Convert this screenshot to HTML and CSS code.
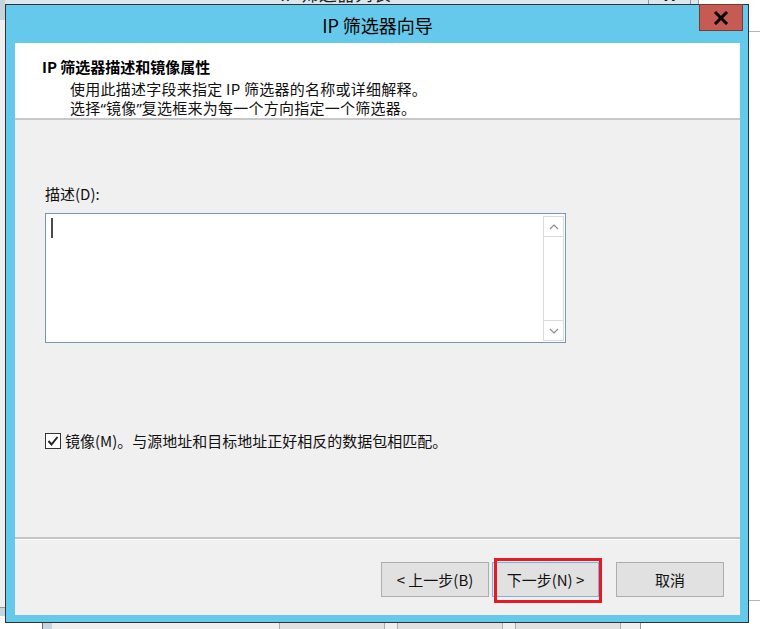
FILE: index.html
```html
<!DOCTYPE html>
<html lang="zh-CN">
<head>
<meta charset="utf-8">
<title>IP 筛选器向导</title>
<link rel="stylesheet" href="styles.css">
</head>
<body>
<div class="desk">
  <div class="bg-top">
    <span class="bg-title">IP 筛选器列表</span>
    <span class="bg-close">X</span>
  </div>
  <div class="bg-left"></div>
  <div class="bg-right"></div>
  <div class="bg-bottom">
    <span class="bg-strip"></span>
    <span class="bg-btn">确定</span>
    <span class="bg-btn">取消</span>
    <span class="bg-btn">应用(A)</span>
  </div>

  <div class="dialog">
    <div class="titlebar">
      <span class="title">IP 筛选器向导</span>
    </div>
    <button class="close" type="button" aria-label="关闭">
      <svg width="16" height="14" viewBox="0 0 16 14"><path d="M2 1 L14 13 M14 1 L2 13" stroke="#000" stroke-width="3" fill="none"/></svg>
    </button>
    <div class="client">
      <div class="header">
        <div class="h-title">IP 筛选器描述和镜像属性</div>
        <div class="h-line">使用此描述字段来指定 IP 筛选器的名称或详细解释。</div>
        <div class="h-line">选择<span class="q">“</span>镜像<span class="q">”</span>复选框来为每一个方向指定一个筛选器。</div>
      </div>
      <div class="body">
        <div class="field-label">描述(D):</div>
        <div class="textbox">
          <div class="text-area"><span class="caret"></span></div>
          <div class="vscroll">
            <div class="sb-btn">
              <svg width="10" height="6" viewBox="0 0 10 6"><path d="M1 5 L5 1 L9 5" stroke="#8a8a8a" stroke-width="1.2" fill="none"/></svg>
            </div>
            <div class="sb-track"></div>
            <div class="sb-btn">
              <svg width="10" height="6" viewBox="0 0 10 6"><path d="M1 1 L5 5 L9 1" stroke="#8a8a8a" stroke-width="1.2" fill="none"/></svg>
            </div>
          </div>
        </div>
        <label class="check">
          <span class="box">
            <svg width="14" height="14" viewBox="0 0 14 14"><path d="M2.5 7 L5.5 10.5 L11.5 3" stroke="#222" stroke-width="2" fill="none"/></svg>
          </span>
          <span>镜像(M)。与源地址和目标地址正好相反的数据包相匹配。</span>
        </label>
      </div>
      <div class="footer">
        <button class="btn btn-back" type="button">&lt; 上一步(B)</button>
        <button class="btn btn-next" type="button">下一步(N) &gt;<span class="mark"></span></button>
        <button class="btn btn-cancel" type="button">取消</button>
      </div>
    </div>
  </div>
</div>
</body>
</html>
```
FILE: styles.css
```css
* { box-sizing: border-box; }

html, body {
  margin: 0;
  padding: 0;
}

body {
  width: 760px;
  height: 629px;
  overflow: hidden;
  background: #ffffff;
  font-family: "Noto Sans CJK SC", "Noto Sans", sans-serif;
  color: #000;
}

.desk {
  position: relative;
  width: 760px;
  height: 629px;
  overflow: hidden;
}

/* ---------- background windows ---------- */
.bg-top {
  position: absolute;
  left: 0;
  top: -30px;
  width: 699px;
  height: 34px;
  background: #dde6eb;
  border-right: 1px solid #9aa4aa;
}
.bg-title {
  position: absolute;
  left: 280px;
  top: 12px;
  font-size: 18px;
  line-height: 22px;
  color: #222;
}
.bg-close {
  position: absolute;
  left: 648px;
  top: 0;
  width: 43px;
  height: 34px;
  border-left: 1px solid #8f969a;
  border-right: 1px solid #8f969a;
  text-align: center;
  font-family: "Liberation Sans", sans-serif;
  font-weight: bold;
  font-size: 16px;
  line-height: 18px;
  padding-top: 17px;
  color: #111;
}

.bg-left {
  position: absolute;
  left: 0;
  top: 0;
  width: 5px;
  height: 616px;
  background: linear-gradient(to bottom, #c6d4db 0, #c6d4db 20px, #efefef 20px, #efefef 607px, #8c9aa2 607px, #8c9aa2 608px, #c6d4db 608px);
}

.bg-right {
  position: absolute;
  left: 749px;
  top: 31px;
  width: 11px;
  height: 570px;
  background: #ffffff;
  border-top: 1px solid #b4b4b4;
  border-bottom: 1px solid #b4b4b4;
}

.bg-bottom {
  position: absolute;
  left: 42px;
  top: 620px;
  width: 599px;
  height: 30px;
  background: #efefef;
  border-left: 1px solid #6b6b6b;
  border-right: 1px solid #9a9a9a;
  display: flex;
  align-items: flex-start;
}
.bg-strip {
  width: 9px;
  height: 30px;
  background: #c6d5de;
  margin-right: 227px;
}
.bg-btn {
  width: 106px;
  height: 26px;
  margin-top: 2px;
  margin-right: 12px;
  background: #e1e1e1;
  border: 1px solid #adadad;
  font-size: 15px;
  line-height: 20px;
  padding-top: 4px;
  text-align: center;
  color: #111;
}

/* ---------- dialog ---------- */
.dialog {
  position: absolute;
  left: 5px;
  top: 4px;
  width: 744px;
  height: 619px;
  border: 1px solid #2f3336;
  background: #64c9ea;
  padding: 0 8px 7px 9px;
  display: flex;
  flex-direction: column;
}

.titlebar {
  height: 38px;
  display: flex;
  align-items: center;
  justify-content: center;
  flex: none;
}
.title {
  font-size: 18px;
  line-height: 22px;
  color: #000;
  padding-top: 1px;
}

.close {
  position: absolute;
  left: 693px;
  top: -1px;
  width: 44px;
  height: 27px;
  margin: 0;
  padding: 0;
  border: 1px solid #7d3a34;
  background: #c55b52;
  display: flex;
  align-items: center;
  justify-content: center;
}

.client {
  flex: 1;
  background: #f0f0f0;
  display: flex;
  flex-direction: column;
  overflow: hidden;
}

/* header */
.header {
  background: #ffffff;
  height: 77px;
  border-bottom: 2px solid #c8c8c8;
  padding: 14px 0 0 27px;
  flex: none;
}
.h-title {
  font-size: 15px;
  font-weight: bold;
  line-height: 19px;
  margin-bottom: 3px;
}
.h-line {
  font-size: 15px;
  line-height: 19px;
  padding-left: 28px;
  letter-spacing: 0.25px;
  color: #111;
}
.q {
  font-family: "Noto Sans", sans-serif;
  letter-spacing: 0;
}

/* body */
.body {
  flex: 1;
  padding: 64px 0 0 30px;
}
.field-label {
  font-size: 15px;
  line-height: 20px;
  color: #111;
}
.textbox {
  margin-top: 9px;
  width: 521px;
  height: 130px;
  background: #ffffff;
  border: 1px solid #7595ba;
  padding: 2px 1px 1px 2px;
  display: flex;
}
.text-area {
  flex: 1;
  padding: 2px 0 0 3px;
}
.caret {
  display: block;
  width: 2px;
  height: 20px;
  background: #4a4a4a;
}
.vscroll {
  width: 21px;
  display: flex;
  flex-direction: column;
  border: 1px solid #dadada;
}
.sb-btn {
  height: 20px;
  display: flex;
  align-items: center;
  justify-content: center;
  background: #ffffff;
}
.sb-btn:first-child { border-bottom: 1px solid #dadada; }
.sb-btn:last-child { border-top: 1px solid #dadada; }
.sb-track {
  flex: 1;
  background: #ffffff;
}

.check {
  margin-top: 88px;
  display: flex;
  align-items: center;
  height: 20px;
  font-size: 15px;
  line-height: 20px;
  color: #111;
}
.box {
  width: 16px;
  height: 16px;
  border: 1px solid #333;
  background: #fff;
  margin-right: 4px;
  display: flex;
  align-items: center;
  justify-content: center;
}

/* footer */
.footer {
  flex: none;
  height: 78px;
  border-top: 2px solid #c4c4c4;
  box-shadow: inset 0 1px 0 #ffffff;
  padding: 23px 16px 0 0;
  display: flex;
  justify-content: flex-end;
  align-items: flex-start;
}
.btn {
  position: relative;
  height: 35px;
  margin: 0;
  padding: 0;
  background: #e1e1e1;
  border: 1px solid #adadad;
  font-family: "Noto Sans CJK SC", "Noto Sans", sans-serif;
  font-size: 15px;
  line-height: 20px;
  color: #111;
}
.btn-back { width: 108px; }
.btn-next {
  width: 107px;
  margin-left: 3px;
  border-color: #7fb1e0;
}
.btn-cancel {
  width: 108px;
  margin-left: 17px;
}
.mark {
  position: absolute;
  left: 1px;
  top: -5px;
  width: 108px;
  height: 45px;
  border: 3px solid #e51b24;
}
```
